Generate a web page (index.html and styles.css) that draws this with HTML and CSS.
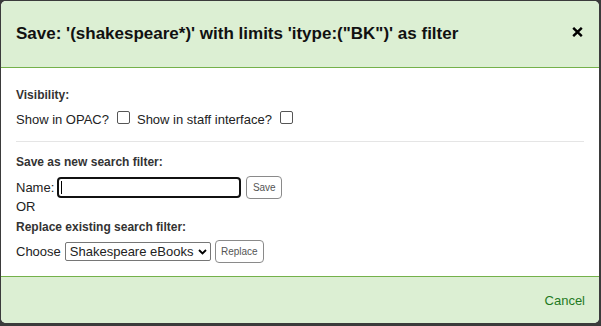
FILE: index.html
```html
<!DOCTYPE html>
<html>
<head>
<meta charset="utf-8">
<link rel="stylesheet" href="styles.css">
</head>
<body>
<div class="backdrop">
  <div class="modal">
    <div class="modal-header">
      <h1 class="modal-title">Save: '(shakespeare*)' with limits 'itype:("BK")' as filter</h1>
      <button class="close" type="button" aria-label="Close">
        <svg width="11" height="10" viewBox="0 0 11 10"><path d="M1.2 0.8 L9.8 9.2 M9.8 0.8 L1.2 9.2" stroke="#000" stroke-width="2.4" stroke-linecap="butt"/></svg>
      </button>
    </div>
    <div class="modal-body">
      <div class="section-label">Visibility:</div>
      <div class="row vis-row">
        <label class="check-label">Show in OPAC?</label>
        <span class="checkbox"></span>
        <label class="check-label">Show in staff interface?</label>
        <span class="checkbox"></span>
      </div>
      <hr class="divider">
      <div class="section-label">Save as new search filter:</div>
      <div class="row name-row">
        <label class="text-label">Name:</label>
        <span class="text-input"><span class="caret"></span></span>
        <button class="small-btn save-btn" type="button">Save</button>
      </div>
      <div class="or">OR</div>
      <div class="section-label replace-label">Replace existing search filter:</div>
      <div class="row choose-row">
        <label class="text-label">Choose</label>
        <span class="select">Shakespeare eBooks
          <svg class="chev" width="9" height="6" viewBox="0 0 9 6"><path d="M1 1 L4.5 4.5 L8 1" fill="none" stroke="#000" stroke-width="1.8"/></svg>
        </span>
        <button class="small-btn replace-btn" type="button">Replace</button>
      </div>
    </div>
    <div class="modal-footer">
      <a class="cancel" href="#">Cancel</a>
    </div>
  </div>
</div>
</body>
</html>
```

FILE: styles.css
```css
html, body {
  margin: 0;
  padding: 0;
  background: #3b3b3b;
}
body {
  font-family: "Liberation Sans", Arial, sans-serif;
  font-size: 13px;
  color: #222;
}
.backdrop {
  width: 601px;
  height: 326px;
  box-sizing: border-box;
  padding: 1px 2px 3px 1px;
  background: #3b3b3b;
}
.modal {
  height: 100%;
  display: flex;
  flex-direction: column;
  background: #fff;
  border-radius: 5px;
  overflow: hidden;
}
.modal-header {
  height: 66px;
  flex: 0 0 66px;
  background: #dcefd3;
  border-bottom: 1px solid #74b14a;
  display: flex;
  align-items: center;
  justify-content: space-between;
  padding: 0 16px 0 15px;
}
.modal-title {
  margin: 0;
  font-size: 17px;
  font-weight: bold;
  color: #111;
  line-height: 20px;
}
.close {
  border: 0;
  background: transparent;
  padding: 0;
  margin-top: -4px;
  display: flex;
}
.modal-body {
  flex: 1;
  padding: 19px 15px 0 15px;
}
.section-label {
  font-size: 12px;
  font-weight: bold;
  line-height: 16px;
  color: #333;
}
.row {
  display: flex;
  align-items: center;
}
.vis-row {
  margin-top: 8px;
  height: 17px;
}
.check-label {
  line-height: 17px;
}
.checkbox {
  width: 11px;
  height: 11px;
  border: 1px solid #555;
  border-radius: 2px;
  margin: -4px 7px 0 8px;
  background: #fff;
}
.divider {
  border: 0;
  border-top: 1px solid #e5e5e5;
  margin: 13px 0 12px 0;
}
.name-row {
  margin-top: 6px;
  height: 23px;
}
.text-label {
  line-height: 17px;
  margin-right: 3px;
}
.text-input {
  width: 178px;
  height: 17px;
  border: 2px solid #111;
  border-radius: 4px;
  background: #fff;
  display: flex;
  align-items: center;
  padding-left: 2px;
}
.caret {
  width: 1px;
  height: 13px;
  background: #000;
}
.small-btn {
  font-family: "Liberation Sans", Arial, sans-serif;
  font-size: 10px;
  color: #555;
  background: #fff;
  border: 1px solid #8a8a8a;
  border-radius: 4px;
  padding: 0;
  height: 23px;
}
.save-btn {
  width: 36px;
  margin-left: 5px;
}
.or {
  margin-top: 0px;
  line-height: 16px;
}
.replace-label {
  margin-top: 4px;
}
.choose-row {
  margin-top: 5px;
  height: 23px;
}
.select {
  box-sizing: border-box;
  width: 146px;
  height: 19px;
  border: 1px solid #767676;
  border-radius: 2px;
  display: flex;
  align-items: center;
  justify-content: space-between;
  padding: 0 3px 0 4px;
  font-size: 13px;
  color: #222;
  margin-left: 1px;
}
.chev {
  display: block;
}
.replace-btn {
  width: 49px;
  margin-left: 4px;
}
.modal-footer {
  flex: 0 0 46px;
  height: 46px;
  background: #dcefd3;
  border-top: 1px solid #74b14a;
  display: flex;
  align-items: center;
  justify-content: flex-end;
  padding: 0 14px 0 15px;
}
.cancel {
  color: #1f7a1f;
  text-decoration: none;
  font-size: 13px;
}
```
